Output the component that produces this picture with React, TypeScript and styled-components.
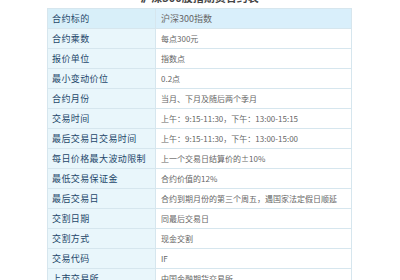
import styled, { createGlobalStyle } from 'styled-components';

const GlobalStyle = createGlobalStyle`
	html, body {
		margin: 0;
		padding: 0;
		background: #ffffff;
		font-family: 'SimSun', 'Noto Sans CJK SC', 'Liberation Sans', sans-serif;
	}
`;

const rows: [string, string][] = [
	['合约乘数', '每点300元'],
	['报价单位', '指数点'],
	['最小变动价位', '0.2点'],
	['合约月份', '当月、下月及随后两个季月'],
	['交易时间', '上午：9:15-11:30，下午：13:00-15:15'],
	['最后交易日交易时间', '上午：9:15-11:30，下午：13:00-15:00'],
	['每日价格最大波动限制', '上一个交易日结算价的±10%'],
	['最低交易保证金', '合约价值的12%'],
	['最后交易日', '合约到期月份的第三个周五，遇国家法定假日顺延'],
	['交割日期', '同最后交易日'],
	['交割方式', '现金交割'],
	['交易代码', 'IF'],
	['上市交易所', '中国金融期货交易所'],
];

const App = () => {
	return (
		<>
			<GlobalStyle />
			<Page>
				<TitleClip>
					<Title>沪深300股指期货合约表</Title>
				</TitleClip>
				<Table>
					<tbody>
						<Row $head>
							<Label>合约标的</Label>
							<Value $big>沪深300指数</Value>
						</Row>
						{rows.map(([label, value]) => (
							<Row key={label}>
								<Label>{label}</Label>
								<Value>{value}</Value>
							</Row>
						))}
					</tbody>
				</Table>
			</Page>
		</>
	);
};

const Page = styled.div`
	width: 305px;
	margin-left: 47px;
	height: 280px;
	overflow: hidden;
`;

const TitleClip = styled.div`
	height: 8px;
	overflow: hidden;
	display: flex;
	justify-content: center;
`;

const Title = styled.div`
	font-size: 11px;
	font-weight: bold;
	line-height: 12px;
	margin-top: -9px;
	color: #444;
	white-space: nowrap;
`;

const Table = styled.table`
	width: 305px;
	border-collapse: collapse;
	table-layout: fixed;
`;

const Row = styled.tr<{ $head?: boolean }>`
	height: 20px;
	background: ${({ $head }) => ($head ? '#d9effb' : '#ffffff')};
`;

const Label = styled.td`
	width: 108px;
	box-sizing: border-box;
	padding: 0 0 0 4px;
	border: 1px solid #d6e6ee;
	background: rgba(215, 238, 248, 0.55);
	color: #24476a;
	font-size: 9px;
	letter-spacing: 0.4px;
	white-space: nowrap;
	vertical-align: middle;
`;

const Value = styled.td<{ $big?: boolean }>`
	padding: 0 0 0 5px;
	border: 1px solid #d6e6ee;
	color: #666;
	font-size: ${({ $big }) => ($big ? '9px' : '8px')};
	white-space: nowrap;
	vertical-align: middle;
`;

export default App;
